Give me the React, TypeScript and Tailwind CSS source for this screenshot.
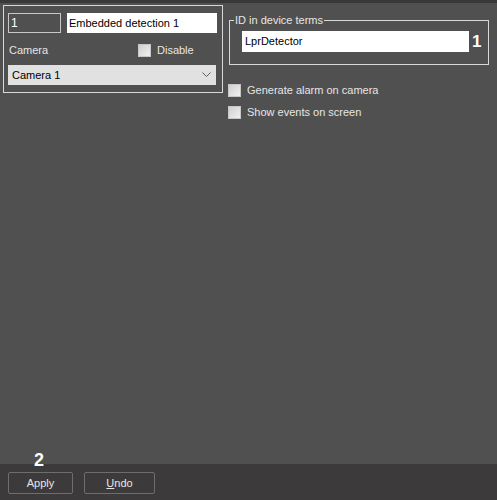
import React from "react";

function Check({ label }: { label: string }) {
  return (
    <div className="flex items-center gap-[6px] h-[13px]">
      <div className="w-[13px] h-[13px] border border-[#c8c8c8] bg-gradient-to-br from-[#d0d0d0] to-[#f0f0f0]" />
      <span className="text-[11px] text-[#e6e6e6] leading-none">{label}</span>
    </div>
  );
}

export default function App() {
  return (
    <div
      className="w-[497px] h-[500px] flex flex-col bg-[#505050] relative overflow-hidden"
      style={{ fontFamily: '"Liberation Sans", Arial, sans-serif' }}
    >
      <div className="h-[3px] bg-[#383838]" />
      <div className="flex-1 flex items-start pl-[3px] pt-[2px]">
        {/* Left frame */}
        <div className="w-[220px] h-[88px] border border-[#d8d8d8] pl-[4px] pt-[7px] flex flex-col">
          <div className="flex gap-[6px]">
            <div className="w-[53px] h-[20px] border border-[#c8c8c8] bg-[#505050] text-[12px] text-white flex items-center pl-[2px]">
              1
            </div>
            <div className="w-[150px] h-[20px] bg-white text-[11px] text-black flex items-center pl-[2px]">
              Embedded detection 1
            </div>
          </div>
          <div className="flex items-center mt-[11px] h-[13px]">
            <span className="text-[11px] text-[#e6e6e6] w-[130px] pl-[1px]">Camera</span>
            <Check label="Disable" />
          </div>
          <div className="mt-[8px] w-[208px] h-[20px] bg-[#e1e1e1] flex items-center justify-between pl-[4px] pr-[5px]">
            <span className="text-[11px] text-black">Camera 1</span>
            <svg width="9" height="6" viewBox="0 0 9 6">
              <path d="M0.5 0.5 L4.5 4.5 L8.5 0.5" stroke="#606060" fill="none" strokeWidth="1" />
            </svg>
          </div>
        </div>
        {/* Right */}
        <div className="ml-[6px] flex flex-col">
          <fieldset className="w-[260px] h-[52px] border border-[#d8d8d8] mt-[8px] pl-[4px] relative">
            <legend className="text-[11px] text-[#e6e6e6] px-[1px] leading-[14px]">
              ID in device terms
            </legend>
            <div className="flex items-center mt-[4px] ml-[8px]">
              <div className="w-[227px] h-[21px] bg-white text-[11px] text-black flex items-center pl-[3px]">
                LprDetector
              </div>
              <span className="ml-[3px] text-[17px] font-bold text-white leading-none">1</span>
            </div>
          </fieldset>
          <div className="mt-[19px] flex flex-col gap-[9px] -ml-[1px]">
            <Check label="Generate alarm on camera" />
            <Check label="Show events on screen" />
          </div>
        </div>
      </div>
      <span className="absolute left-[34px] top-[451px] text-[18px] font-bold text-white leading-none">2</span>
      <div className="h-[36px] bg-[#3c3a3a] flex items-start pt-[8px] pl-[8px] gap-[11px]">
        <button className="w-[65px] h-[22px] border border-[#6e6e6e] rounded-[2px] text-[11px] text-[#e6e6e6]">
          Apply
        </button>
        <button className="w-[71px] h-[22px] border border-[#6e6e6e] rounded-[2px] text-[11px] text-[#e6e6e6]">
          <span className="underline">U</span>ndo
        </button>
      </div>
    </div>
  );
}
